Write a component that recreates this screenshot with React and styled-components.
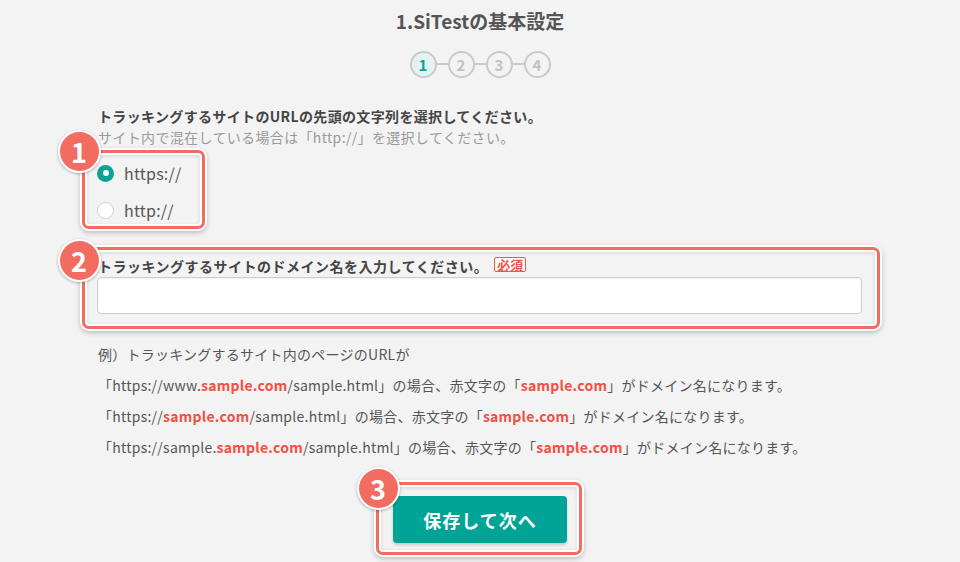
import React from "react";
import styled, { createGlobalStyle } from "styled-components";

const GlobalStyle = createGlobalStyle`
  html, body { margin: 0; padding: 0; }
  body {
    background: #f3f3f3;
    font-family: "Noto Sans CJK JP", "Noto Sans", sans-serif;
    color: #555;
    overflow: hidden;
  }
  * { box-sizing: border-box; }
`;

const Page = styled.div`
  width: 764px;
  margin: 0 auto;
  padding-top: 8px;
  height: 562px;
`;

const Title = styled.h1`
  margin: 0;
  text-align: center;
  font-size: 19px;
  font-weight: 700;
  line-height: 26px;
  color: #555;
`;

const Steps = styled.div`
  display: flex;
  justify-content: center;
  align-items: center;
  margin-top: 16.5px;
`;

const Step = styled.div`
  width: 27px;
  height: 27px;
  border-radius: 50%;
  border: 2px solid #cacaca;
  background: ${(p) => (p.$active ? "#e2f3f1" : "transparent")};
  color: ${(p) => (p.$active ? "#149f90" : "#c2c2c2")};
  display: flex;
  align-items: center;
  justify-content: center;
  font-size: 15px;
  font-weight: 700;
  line-height: 1;
`;

const Connector = styled.div`
  width: 11px;
  height: 2px;
  background: #cacaca;
`;

const Question = styled.p`
  margin: 28px 0 0;
  font-size: 14px;
  font-weight: 700;
  line-height: 21px;
  letter-spacing: 0.35px;
  color: #444;
`;

const SubText = styled.p`
  margin: 0;
  font-size: 14px;
  line-height: 21px;
  letter-spacing: 0.35px;
  color: #9a9a9a;
`;

const Highlight = styled.div`
  position: relative;
  width: ${(p) => p.$width || "auto"};
  margin: ${(p) => p.$margin || "0"};

  &::before {
    content: "";
    position: absolute;
    top: ${(p) => p.$inset[0]}px;
    right: ${(p) => p.$inset[1]}px;
    bottom: ${(p) => p.$inset[2]}px;
    left: ${(p) => p.$inset[3]}px;
    border: 3.5px solid #f26c61;
    border-radius: 7px;
    box-shadow: 0 0 0 2px #fff, 0 2px 5px 2px rgba(0, 0, 0, 0.22),
      inset 0 0 0 2px #fff, inset 0 1px 4px 2px rgba(0, 0, 0, 0.12);
    pointer-events: none;
    z-index: 1;
  }
`;

const NumberBadge = styled.div`
  position: absolute;
  left: ${(p) => p.$left}px;
  top: ${(p) => p.$top}px;
  width: 43px;
  height: 43px;
  border-radius: 50%;
  background: #f26c61;
  border: 2px solid #fff;
  box-shadow: 0 1px 3px rgba(0, 0, 0, 0.3);
  color: #fff;
  font-size: 27px;
  font-weight: 700;
  display: flex;
  align-items: center;
  justify-content: center;
  line-height: 1;
  z-index: 2;
`;

const RadioGroup = styled.div`
  display: flex;
  flex-direction: column;
`;

const RadioRow = styled.label`
  height: 37px;
  display: flex;
  align-items: center;
  gap: 10px;
  font-size: 16px;
  letter-spacing: 0.2px;
  color: #555;
  margin-left: -1px;
`;

const RadioMark = styled.span`
  width: 17px;
  height: 17px;
  border-radius: 50%;
  flex: none;
  display: flex;
  align-items: center;
  justify-content: center;
  background: ${(p) => (p.$checked ? "#0ea292" : "#fff")};
  border: ${(p) => (p.$checked ? "none" : "1px solid #cfcfcf")};

  &::after {
    content: "";
    width: 6px;
    height: 6px;
    border-radius: 50%;
    background: #fff;
    display: ${(p) => (p.$checked ? "block" : "none")};
  }
`;

const FieldLabel = styled.div`
  display: flex;
  align-items: flex-start;
  font-size: 14px;
  font-weight: 700;
  line-height: 21px;
  letter-spacing: 0.5px;
  color: #444;
`;

const Required = styled.span`
  margin: 1px 0 0 6px;
  font-size: 13px;
  font-weight: 700;
  line-height: 13px;
  letter-spacing: 0;
  padding: 0 2px;
  color: #f0564c;
  border: 1px solid #f0564c;
  border-radius: 2px;
  background: #fff;
`;

const TextInput = styled.input`
  display: block;
  width: 765px;
  margin: 0.5px 0 0 -1px;
  height: 37px;
  border: 1px solid #cccccc;
  border-radius: 4px;
  background: #fff;
  box-shadow: inset 0 1px 2px rgba(0, 0, 0, 0.06);
  font-family: inherit;
  font-size: 14px;
  padding: 0 10px;
  outline: none;
`;

const Examples = styled.div`
  margin-top: 24.5px;
  font-size: 14px;
  line-height: 31px;
  letter-spacing: 0.25px;
  color: #555;
`;

const Red = styled.span`
  color: #f24f45;
  font-weight: 700;
`;

const ButtonRow = styled.div`
  display: flex;
  justify-content: center;
  margin-top: 33.5px;
`;

const SaveButton = styled.button`
  width: 174px;
  height: 47px;
  border: none;
  border-radius: 4px;
  background: #00a496;
  color: #fff;
  font-family: inherit;
  font-size: 18px;
  font-weight: 700;
  letter-spacing: 1px;
  box-shadow: 0 2px 3px rgba(0, 0, 0, 0.18);
  cursor: pointer;
`;

export default function App() {
  return (
    <>
      <GlobalStyle />
      <Page>
        <Title>1.SiTestの基本設定</Title>
        <Steps>
          <Step $active>1</Step>
          <Connector />
          <Step>2</Step>
          <Connector />
          <Step>3</Step>
          <Connector />
          <Step>4</Step>
        </Steps>

        <Question>トラッキングするサイトのURLの先頭の文字列を選択してください。</Question>
        <SubText>サイト内で混在している場合は「http://」を選択してください。</SubText>

        <Highlight $width="84px" $margin="7px 0 0" $inset={[-4.5, -23, -0.5, -16]}>
          <NumberBadge $left={-40.5} $top={-25}>1</NumberBadge>
          <RadioGroup>
            <RadioRow>
              <RadioMark $checked />
              https://
            </RadioRow>
            <RadioRow>
              <RadioMark />
              http://
            </RadioRow>
          </RadioGroup>
        </Highlight>

        <Highlight $margin="27px 0 0" $inset={[-8.5, -18, -15, -16]}>
          <NumberBadge $left={-40.5} $top={-17}>2</NumberBadge>
          <FieldLabel>
            トラッキングするサイトのドメイン名を入力してください。
            <Required>必須</Required>
          </FieldLabel>
          <TextInput type="text" />
        </Highlight>

        <Examples>
          <div>例）トラッキングするサイト内のページのURLが</div>
          <div>
            「https://www.<Red>sample.com</Red>/sample.html」の場合、赤文字の「<Red>sample.com</Red>」がドメイン名になります。
          </div>
          <div>
            「https://<Red>sample.com</Red>/sample.html」の場合、赤文字の「<Red>sample.com</Red>」がドメイン名になります。
          </div>
          <div>
            「https://sample.<Red>sample.com</Red>/sample.html」の場合、赤文字の「<Red>sample.com</Red>」がドメイン名になります。
          </div>
        </Examples>

        <ButtonRow>
          <Highlight $inset={[-14, -15, -12, -17]}>
            <NumberBadge $left={-36.5} $top={-29.5}>3</NumberBadge>
            <SaveButton>保存して次へ</SaveButton>
          </Highlight>
        </ButtonRow>
      </Page>
    </>
  );
}
